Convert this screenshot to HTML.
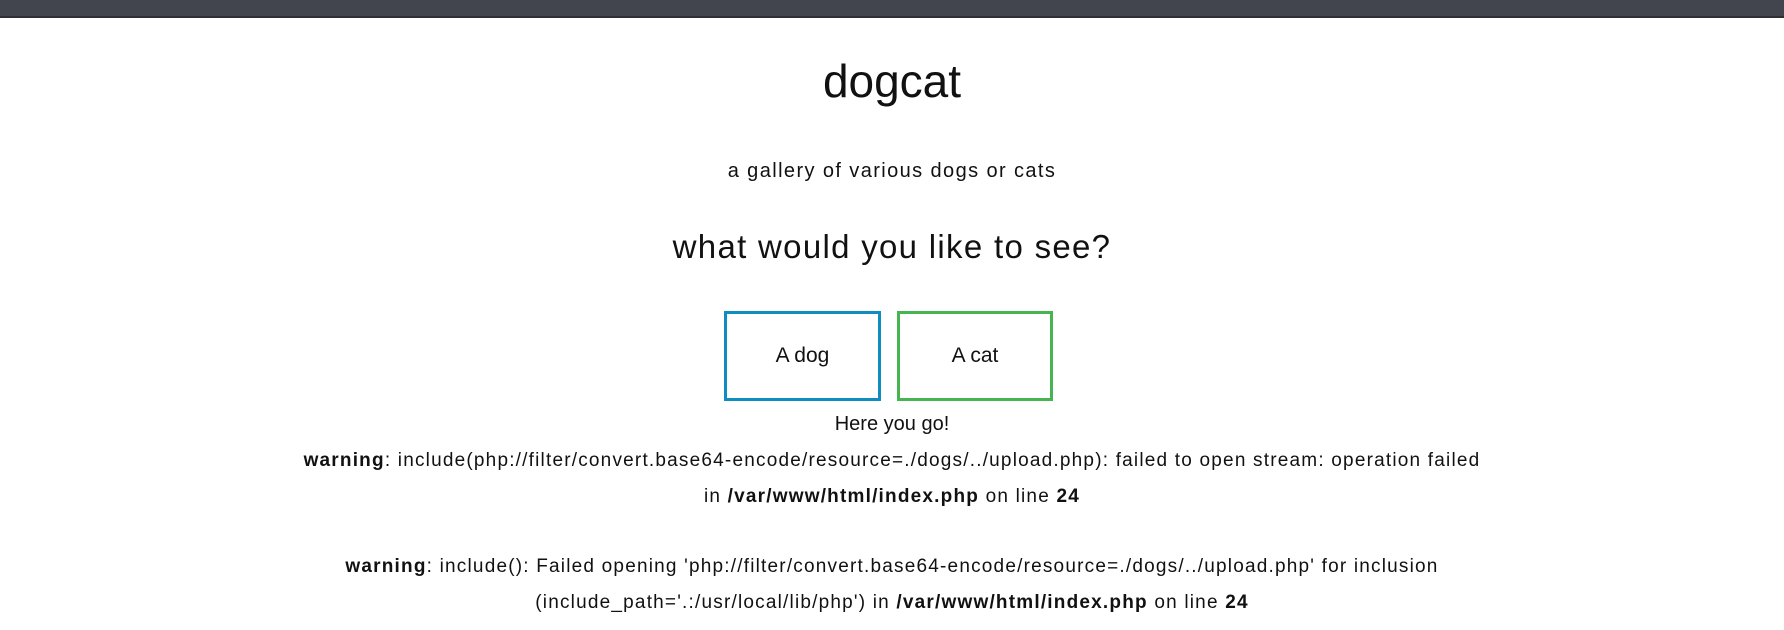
<!DOCTYPE html>
<html><head><meta charset="utf-8"><style>
html,body{margin:0;padding:0;width:1784px;height:630px;overflow:hidden;background:#fff;font-family:"Liberation Sans",sans-serif;color:#111}
.bar{position:absolute;left:0;top:0;width:1784px;height:16px;background:#42454d;border-bottom:2px solid #2e3036}
.t{position:absolute;left:0;width:1784px;text-align:center;white-space:nowrap}
.btn{position:absolute;top:311px;height:84px;border:3px solid;box-sizing:content-box;display:flex;align-items:center;justify-content:center;font-size:21px}
</style></head><body>
<div class="bar"></div>
<div class="t" style="top:54px;font-size:46px">dogcat</div>
<div class="t" style="top:160px;font-size:20px;letter-spacing:1.4px">a gallery of various dogs or cats</div>
<div class="t" style="top:228px;font-size:33px;letter-spacing:1.3px">what would you like to see?</div>
<div class="btn" style="left:724px;width:151px;border-color:#0f8dc0">A dog</div>
<div class="btn" style="left:897px;width:150px;border-color:#46b450">A cat</div>
<div class="t" style="top:413px;font-size:20px">Here you go!</div>
<div class="t" style="top:450px;font-size:19px;letter-spacing:1.2px"><b>warning</b>: include(php://filter/convert.base64-encode/resource=./dogs/../upload.php): failed to open stream: operation failed</div>
<div class="t" style="top:486px;font-size:19px;letter-spacing:1.2px">in <b>/var/www/html/index.php</b> on line <b>24</b></div>
<div class="t" style="top:556px;font-size:19px;letter-spacing:1.2px"><b>warning</b>: include(): Failed opening 'php://filter/convert.base64-encode/resource=./dogs/../upload.php' for inclusion</div>
<div class="t" style="top:592px;font-size:19px;letter-spacing:1.2px">(include_path='.:/usr/local/lib/php') in <b>/var/www/html/index.php</b> on line <b>24</b></div>
</body></html>
